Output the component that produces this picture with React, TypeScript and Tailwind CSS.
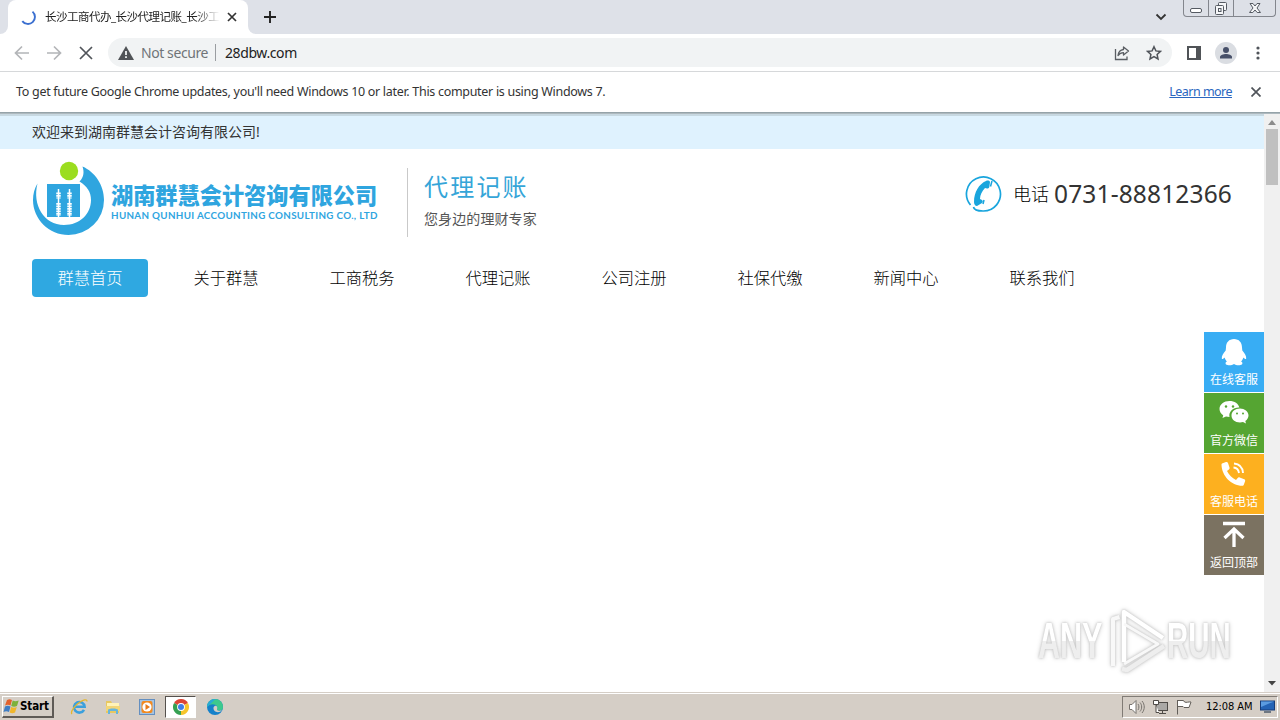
import React from 'react';

function Chrome() {
  return (
    <>
      <div className="flex h-[34px] bg-[#dee1e8]">
        <div className="h-[34px] w-2 bg-white">
          <div className="h-full w-full rounded-br-lg bg-[#dee1e8]" />
        </div>
        <div className="flex h-[34px] w-[240px] items-center rounded-t-lg bg-white pl-[12px]">
          <svg width="16" height="16" viewBox="0 0 16 16" fill="none" className="shrink-0">
            <path d="M12.500 2.640A7 7 0 1 1 2.300 12.100" stroke="#3a6fd0" strokeWidth="1.900" />
          </svg>
          <div className="ml-[9px] w-[175px] shrink-0 whitespace-nowrap text-[11.500px] leading-[18px] tracking-[-0.500px] text-[#222] [mask-image:linear-gradient(90deg,#000_86%,transparent)]">
            长沙工商代办_长沙代理记账_长沙工
          </div>
          <svg width="10" height="10" viewBox="0 0 10 10" className="ml-[7px] shrink-0">
            <path d="M1 1l8 8M9 1L1 9" stroke="#333" strokeWidth="1.700" />
          </svg>
        </div>
        <div className="h-[34px] w-2 bg-white">
          <div className="h-full w-full rounded-bl-lg bg-[#dee1e8]" />
        </div>
        <svg width="14" height="14" viewBox="0 0 14 14" className="ml-[7px] mt-[10px]">
          <path d="M7 1v12M1 7h12" stroke="#222" strokeWidth="1.900" />
        </svg>
        <div className="flex-1" />
        <svg width="12" height="8" viewBox="0 0 12 8" fill="none" className="mr-[16px] mt-[13px]">
          <path d="M1.500 1.500L6 6l4.500-4.500" stroke="#333" strokeWidth="1.800" />
        </svg>
        <div className="mr-[4px] flex h-[17px] w-[93px] rounded-b-[4px] border border-t-0 border-[#83868d] bg-[#dde0e7]">
          <div className="flex w-[25px] justify-center border-r border-[#83868d]">
            <svg width="14" height="17" viewBox="0 0 14 17">
              <rect x="1.500" y="8.500" width="11" height="4" rx="1.500" fill="#fff" stroke="#555a62" />
            </svg>
          </div>
          <div className="flex w-[25px] justify-center border-r border-[#83868d]">
            <svg width="14" height="17" viewBox="0 0 14 17" fill="#f5f6f8" stroke="#555a62">
              <rect x="4.500" y="2.500" width="8" height="8" rx="1" />
              <rect x="1.500" y="5.500" width="8" height="9" rx="1" />
              <rect x="4.500" y="8.500" width="2.500" height="3" />
            </svg>
          </div>
          <div className="flex flex-1 justify-center">
            <svg width="14" height="17" viewBox="0 0 14 17">
              <path d="M2 3.500h3l2 2.500 2-2.500h3L9 8l3.500 4.500h-3.300L7 10l-2.200 2.500H1.500L5 8z" fill="#f5f6f8" stroke="#555a62" />
            </svg>
          </div>
        </div>
      </div>

      <div className="flex h-[37px] items-center bg-white pl-[14px] pr-[14px]">
        <svg width="80" height="16" viewBox="0 0 80 16" fill="none" strokeWidth="1.700">
          <path d="M15 8H2M8 1.500L1.500 8 8 14.500M33 8h13M40 1.500L46.500 8 40 14.500" stroke="#b3b5b8" />
          <path d="M66 2l12 12M78 2L66 14" stroke="#50545a" />
        </svg>
        <div className="ml-[14px] flex h-[29px] w-[1064px] shrink-0 items-center rounded-full bg-[#f1f3f4] pl-[10px] pr-[10px]">
          <svg width="16" height="14" viewBox="0 0 16 14">
            <path d="M8 0l8 14H0z" fill="#505357" />
            <path d="M7.100 5h1.800v4H7.100zM7.100 10.300h1.800v1.700H7.100z" fill="#f1f3f4" />
          </svg>
          <span className="ml-[7px] w-[68px] whitespace-nowrap text-[14px] leading-[20px] tracking-[-0.420px] text-[#707478]">Not secure</span>
          <span className="ml-[6px] h-[17px] w-px bg-[#9a9da1]" />
          <span className="ml-[9px] whitespace-nowrap text-[14px] leading-[20px] tracking-[-0.400px] text-[#222]">28dbw.com</span>
          <span className="flex-1" />
          <svg width="16" height="16" viewBox="0 0 16 16" fill="none" stroke="#5a5e63" strokeWidth="1.300">
            <path d="M1.500 4v10.500h11.500v-3" />
            <path d="M9.500 2l5 4-5 4V7.700c-2.500 0-4 .8-5.500 2.800.4-3.300 2-5.600 5.500-6z" strokeLinejoin="round" />
          </svg>
          <svg width="16" height="16" viewBox="0 0 16 16" fill="none" className="ml-[16px]">
            <path d="M8 1.700l1.900 4.200 4.600.5-3.400 3.100.9 4.500-4-2.300L4 14l.9-4.500-3.400-3.100 4.600-.5z" stroke="#50545a" strokeWidth="1.500" />
          </svg>
        </div>
        <svg width="14" height="14" viewBox="0 0 14 14" className="ml-[15px]">
          <path d="M0 0h14v14H0zM2 2v10h7V2z" fill="#505357" fillRule="evenodd" />
        </svg>
        <svg width="22" height="22" viewBox="0 0 22 22" className="ml-[14px]">
          <circle cx="11" cy="11" r="11" fill="#dadde2" />
          <circle cx="11" cy="8" r="3" fill="#475069" />
          <path d="M5 16.500v-1.500c0-2 3.500-3 6-3s6 1 6 3v1.500z" fill="#475069" />
        </svg>
        <svg width="4" height="14" viewBox="0 0 4 14" fill="#50545a" className="ml-[19px]">
          <circle cx="2" cy="2" r="1.600" />
          <circle cx="2" cy="7" r="1.600" />
          <circle cx="2" cy="12" r="1.600" />
        </svg>
      </div>

      <div className="flex h-[41px] items-center border-t border-[#d6d8da] bg-white pl-[16px] pr-[19px] text-[12.500px] leading-[18px] text-[#333]">
        <span className="whitespace-nowrap tracking-[-0.300px]">To get future Google Chrome updates, you'll need Windows 10 or later. This computer is using Windows 7.</span>
        <span className="flex-1" />
        <span className="mr-[19px] whitespace-nowrap tracking-[-0.530px] text-[#2a66c0] underline">Learn more</span>
        <svg width="10" height="10" viewBox="0 0 10 10">
          <path d="M.5.5l9 9M9.500.5l-9 9" stroke="#50545a" strokeWidth="1.700" />
        </svg>
      </div>
      <div className="h-px bg-[#95a3a9]" />
      <div className="h-px bg-[#aeb9be]" />
    </>
  );
}

function Logo() {
  return (
    <svg width="74" height="76" viewBox="0 0 74 76">
      <path d="M50.500 5.500C63 11 72 24 72 39A35.500 35 0 0 1 36.500 74C17 74 1 58 1 39c0-6 1.500-12 4.500-16.500C0 44 12 64 32 64c16 0 27-11 27-25 0-8-4-14-11.500-18.500 4-4 5-9 3-15z" fill="#2fa5df" />
      <circle cx="37" cy="10" r="9.200" fill="#9bdd1f" />
      <path d="M15 23h33v33H15z" fill="#2fa5df" />
      <g stroke="#fff" fill="none">
        <path d="M26.500 28v28M37.500 28v28" strokeWidth="1.500" />
        <path d="M26.500 31.500v6M37.500 31.500v6M26.500 42v13M37.500 42v13" strokeWidth="4.500" strokeDasharray="1.700 .8" />
      </g>
    </svg>
  );
}

const NAV = ['关于群慧', '工商税务', '代理记账', '公司注册', '社保代缴', '新闻中心', '联系我们'];

function SideItem({ color, label, children }: { color: string; label: string; children: React.ReactNode }) {
  return (
    <div className={`flex h-[60px] w-[60px] flex-col items-center pt-[6px] ${color}`}>
      <svg width="30" height="28" viewBox="0 0 30 28">{children}</svg>
      <span className="mt-[5px] whitespace-nowrap text-[12px] leading-[18px] text-white">{label}</span>
    </div>
  );
}

function Page() {
  return (
    <div className="relative flex-1 bg-white text-[#222]">
      <div className="h-[2px] bg-[#c7d8e1]" />
      <div className="h-[33px] bg-[#dff2fe] pl-[32px] text-[14px] leading-[32px] text-[#333]">欢迎来到湖南群慧会计咨询有限公司!</div>
      <div className="flex h-[110px] pl-[32px] pt-[12px]">
        <Logo />
        <div className="ml-[5px] w-[270px] pt-[21px] text-[#2fa5df]">
          <div className="whitespace-nowrap text-[22.200px] font-black leading-[28px]">湖南群慧会计咨询有限公司</div>
          <div className="mt-[-1px] whitespace-nowrap font-[Lato] text-[9.800px] font-bold leading-[12px] tracking-[0.330px]">HUNAN QUNHUI ACCOUNTING CONSULTING CO., LTD</div>
        </div>
        <div className="ml-[26px] mt-[7px] h-[69px] w-px bg-[#c9c9c9]" />
        <div className="ml-[16px] pt-[9px]">
          <div className="whitespace-nowrap text-[24px] leading-[34px] tracking-[2.200px] text-[#35a5d8]">代理记账</div>
          <div className="mt-[5px] whitespace-nowrap text-[14px] leading-[20px] tracking-[0.100px] text-[#555]">您身边的理财专家</div>
        </div>
        <div className="flex-1" />
        <div className="mr-[32px] flex h-[66px] items-center">
          <svg width="38" height="38" viewBox="0 0 38 38">
            <path d="M6.500 30A17 17 0 1 1 19 36c-6 0-9-1-9.500-4" fill="none" stroke="#19a5dd" strokeWidth="1.700" />
            <path d="M22 6c-7 3-12 11-12 21 0 2 1 4 3 4l5-3c1-1 1-2 0-3l-2-1c0-4 2-8 5-11l2 .5c1 0 2-.5 2.300-1.500L26 7c0-1-2-2-4-1z" fill="#19a5dd" />
            <path d="M28 6l-1.500 5.500M20 25l-1 4" stroke="#19a5dd" strokeWidth="1.500" />
          </svg>
          <span className="ml-[11px] whitespace-nowrap text-[18px] font-light leading-[36px] text-black">电话</span>
          <span className="ml-[5px] whitespace-nowrap font-['Noto_Sans'] text-[24.500px] leading-[36px] tracking-[0.150px] text-[#333]">0731-88812366</span>
        </div>
      </div>
      <div className="flex h-[38px] items-center pl-[32px] text-[16.300px] font-light leading-[38px] text-black">
        <div className="h-[38px] w-[116px] rounded-[4px] bg-[#2fa8e1] text-center text-white">群慧首页</div>
        <div className="flex pl-[10px]">
          {NAV.map((n) => (
            <div key={n} className="w-[136px] text-center">{n}</div>
          ))}
        </div>
      </div>

      <div className="absolute right-0 top-[218px] flex flex-col gap-px">
        <SideItem color="bg-[#38adf4]" label="在线客服">
          <path d="M15 1c-5 0-8 3.500-8 8.500l-.3 3C4.500 15 2.500 18 2.800 20.500c.2 1 1.400.5 2.900-1 .4 1.700 1.200 3 2.300 4-2 .8-2 3 .5 3.600 2.500.6 5-.1 6.500-1.200 1.500 1.100 4 1.800 6.500 1.200 2.500-.6 2.500-2.800.5-3.600 1.100-1 1.900-2.300 2.300-4 1.500 1.500 2.700 2 2.900 1 .3-2.500-1.700-5.500-3.900-8l-.3-3C23 4.500 20 1 15 1z" fill="#fff" />
        </SideItem>
        <SideItem color="bg-[#55a532]" label="官方微信">
          <path d="M10.500 2C5 2 .5 5.500.5 10c0 2.600 1.400 4.700 3.700 6.200L3.500 19l3.500-1.600c1.200.3 2.300.5 3.500.5-1.200-5.400 4-9.700 9.900-9.400C19.600 4.700 15.500 2 10.500 2z" fill="#fff" />
          <path d="M21 9.500c-5 0-8.500 3-8.500 7s3.500 7 8.500 7c1 0 2-.2 3-.5l3 1.500-.7-2.500c2-1.300 3.200-3.300 3.200-5.500 0-4-4-7-8.500-7z" fill="#fff" />
          <g fill="#55a532">
            <circle cx="7" cy="7.500" r="1.200" /><circle cx="14" cy="7.500" r="1.200" />
            <circle cx="18" cy="14.500" r="1" /><circle cx="24" cy="14.500" r="1" />
          </g>
        </SideItem>
        <SideItem color="bg-[#fdb01f]" label="客服电话">
          <path d="M3 3.500l4-1.500c1-.3 1.600.1 2 1l1.500 4.500c.3.8 0 1.400-.6 1.900L8 11c2 4 5 7 9 9l1.700-2c.5-.7 1.200-.8 2-.5l4.500 1.800c.9.400 1.200 1 .9 2l-1.300 3.500c-.2.700-.8 1-1.500 1C12 25.500 3 16 2.500 5c0-.7 0-1.200.5-1.500z" fill="#fff" />
          <path d="M14.500 7.500c3.500.3 5 2.300 5.500 5.500M15 3.500c5.500.4 8.500 3.500 9 9.500" fill="none" stroke="#fff" strokeWidth="1.900" />
        </SideItem>
        <SideItem color="bg-[#7b7261]" label="返回顶部">
          <path d="M4 2.500h22M15 26V9M5.500 17L15 8l9.500 9" fill="none" stroke="#fff" strokeWidth="3.300" />
        </SideItem>
      </div>

      <div className="absolute left-[1038px] top-[494px] flex h-[66px] items-center font-['Liberation_Sans'] text-[50px] font-bold leading-[66px] [filter:drop-shadow(0_0_1px_#c4c4c4)_drop-shadow(0_0_2px_#d5d5d5)]">
        <div className="w-[69px]">
          <span className="inline-block origin-left scale-x-[0.610] bg-linear-to-b from-white from-50% to-[#eeeeee] to-50% bg-clip-text text-transparent">ANY</span>
        </div>
        <svg width="60" height="66" viewBox="0 0 60 66" fill="none" strokeLinejoin="round">
          <path d="M12.500 9L6 11v47" stroke="#f8f8f8" strokeWidth="4" />
          <path d="M17 54V4l39 26" stroke="#fff" strokeWidth="4.500" />
          <path d="M17 16l34 20-34 20" stroke="#f8f8f8" strokeWidth="3" />
          <path d="M15 61l5 1 37-24" stroke="#eee" strokeWidth="4.500" />
        </svg>
        <div className="w-[66px]">
          <span className="inline-block origin-left scale-x-[0.590] bg-linear-to-b from-white from-50% to-[#eeeeee] to-50% bg-clip-text text-transparent">RUN</span>
        </div>
      </div>
    </div>
  );
}

function Scrollbar() {
  return (
    <div className="flex w-[16px] flex-col items-center bg-[#f0f0f0]">
      <svg width="8" height="5" viewBox="0 0 8 5" className="mt-[6px]"><path d="M4 0l4 5H0z" fill="#8b8b8b" /></svg>
      <div className="mt-[4px] h-[56px] w-[12px] bg-[#c0c0c0]" />
      <div className="flex-1" />
      <svg width="8" height="5" viewBox="0 0 8 5" className="mb-[6px]"><path d="M0 0h8L4 4.500z" fill="#444" /></svg>
    </div>
  );
}

function Taskbar() {
  return (
    <div className="flex h-[28px] flex-col bg-[#d5cec6]">
      <div className="h-px bg-[#d5cec6]" />
      <div className="h-px bg-white" />
      <div className="flex flex-1 items-center pb-px pl-[2px] pr-[2px]">
        <div className="flex h-[22px] w-[52px] items-center border-b-2 border-r-2 border-b-[#5f5b56] border-r-[#5f5b56] border-l border-t border-l-white border-t-white">
          <svg width="17" height="16" viewBox="0 0 17 16" className="shrink-0">
            <path d="M4 2c2-1 3-1 5 0L7.500 7.500c-2-1-3.500-1-5.500 0z" fill="#e3622d" />
            <path d="M9.700 2.400c2 1 3.500 1 6 0L14 8c-2 1-4 1-5.800 0z" fill="#7db13c" />
            <path d="M2 8.500c2-1 3.500-1 5.500 0L6 14c-2-1-3.500-1-5.500 0z" fill="#3f7dc4" />
            <path d="M8.100 9c2 1 3.800 1 5.700 0L12 14.500c-2 1-3.500 1-5.300 0z" fill="#f0b62c" />
          </svg>
          <span className="whitespace-nowrap font-['DejaVu_Sans_Condensed','DejaVu_Sans'] text-[11.500px] font-bold leading-[18px] tracking-[-0.100px] text-black">Start</span>
        </div>
        <svg width="18" height="18" viewBox="0 0 18 18" className="ml-[16px]" fill="none">
          <path d="M14 11.800a5.300 5.300 0 1 1 .6-3H5" stroke="#3ba0dd" strokeWidth="2.600" />
          <path d="M2 16c-2-2 3-9 8-12 3-2 7-3.500 7-.5" stroke="#e5b62d" strokeWidth="1.300" />
        </svg>
        <svg width="16" height="16" viewBox="0 0 16 16" className="ml-[17px]">
          <path d="M1 2h5l1 2h7v10H1z" fill="#e8c860" />
          <path d="M2 4h12v3H2z" fill="#fff3b8" />
          <path d="M1 7h14v5H1z" fill="#f2d678" />
          <path d="M3 15v-4c0-2 10-2 10 0v4h-2v-3H5v3z" fill="#67b5dc" />
        </svg>
        <svg width="16" height="16" viewBox="0 0 16 16" className="ml-[18px]">
          <rect x=".5" y=".5" width="15" height="15" fill="#a5c4e2" stroke="#648fc0" />
          <rect x="2.500" y="2" width="11" height="12" rx="2" fill="#f28a20" />
          <circle cx="8" cy="8" r="4.600" fill="#fff" />
          <path d="M6.500 5l4.500 3-4.500 3z" fill="#e87a18" />
        </svg>
        <div className="ml-[10px] flex h-[22px] w-[31px] items-center justify-center border border-b-white border-l-[#55514d] border-r-white border-t-[#55514d] bg-white">
          <svg width="16" height="16" viewBox="0 0 16 16">
            <path d="M8 8L1.070 4A8 8 0 0 1 14.930 4z" fill="#dc4535" />
            <path d="M8 8l6.930-4A8 8 0 0 1 8 16z" fill="#f6c52c" />
            <path d="M8 8v8A8 8 0 0 1 1.070 4z" fill="#35a052" />
            <circle cx="8" cy="8" r="3.900" fill="#fff" />
            <circle cx="8" cy="8" r="3" fill="#3f7ee8" />
          </svg>
        </div>
        <svg width="16" height="16" viewBox="0 0 16 16" className="ml-[11px]">
          <circle cx="8" cy="8" r="8" fill="#1581ca" />
          <path d="M0 8A8 8 0 0 1 16 8c0 3-2.500 4-5 3.500C9 11 11 9.500 10 7.500 8 4.500 3 4.500 0 8z" fill="#3dc98d" />
          <path d="M0 8A8 8 0 0 1 9 .1C6 2 4 5 0 8z" fill="#28a9d8" />
          <path d="M10 7.500c1 2-1 3.500 1 4 1.500.4 3 .2 4-.5C12 15 6 13 6.500 8.500c.8-2 2.500-2 3.500-1z" fill="#d5cec6" />
        </svg>
        <div className="flex-1" />
        <div className="flex h-[22px] w-[156px] items-center border border-b-white border-l-[#807b75] border-r-white border-t-[#807b75] pl-[5px] text-black">
          <svg width="18" height="16" viewBox="0 0 18 16" fill="none" stroke="#77736e" className="shrink-0">
            <path d="M1.500 5.500h2.500l4-4v13l-4-4H1.500z" fill="#fff" />
            <path d="M10 5c1.200 1.500 1.200 4.500 0 6M12 3.500c2.200 2.500 2.200 6.500 0 9M14 2c3 3.500 3 8.500 0 12" />
          </svg>
          <svg width="17" height="16" viewBox="0 0 17 16" className="ml-[6px] shrink-0" stroke="#4f4b47">
            <rect x="4.500" y="3.500" width="11" height="8" fill="#aaa8a5" />
            <path d="M7 14.500h7M10.500 12v2" fill="none" />
            <path d="M1.500 1.500h5v4h-5zM4 6v7.500h3" fill="#fff" />
          </svg>
          <svg width="16" height="16" viewBox="0 0 16 16" className="ml-[7px] shrink-0" stroke="#625e59">
            <path d="M1.500 1v14.500M1.500 1.500h6l1 1.500c2 1 4-.5 6.500 0L13 8.500H8L7 7.500H1.500" fill="#fff" />
          </svg>
          <span className="ml-[14px] w-[48px] shrink-0 whitespace-nowrap font-['DejaVu_Sans_Condensed','DejaVu_Sans'] text-[11px] leading-[18px] tracking-[-0.050px]">12:08 AM</span>
          <svg width="15" height="15" viewBox="0 0 15 15" className="ml-[6px] shrink-0">
            <rect x=".5" y="2" width="14" height="9" fill="#2463b5" stroke="#173c78" />
            <path d="M1 2.500h13L1 8z" fill="#5b9be0" />
            <path d="M4 13h7" stroke="#4c5a6b" strokeWidth="1.500" />
          </svg>
        </div>
      </div>
    </div>
  );
}

export default function App() {
  return (
    <div className="flex h-[720px] w-[1280px] flex-col overflow-hidden bg-white font-['Noto_Sans','Noto_Sans_CJK_SC',sans-serif]">
      <Chrome />
      <div className="flex min-h-0 flex-1">
        <Page />
        <Scrollbar />
      </div>
      <Taskbar />
    </div>
  );
}
